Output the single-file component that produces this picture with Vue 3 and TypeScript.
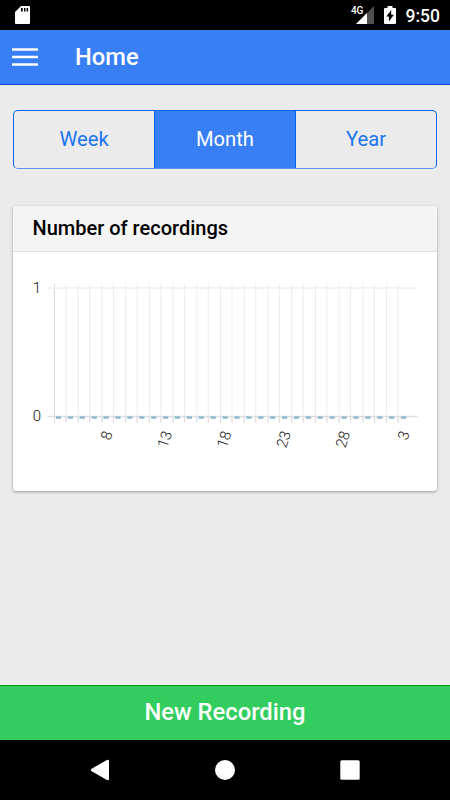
<script setup lang="ts">
import { ref } from 'vue'

const periods = ['Week', 'Month', 'Year'] as const
const selected = ref<(typeof periods)[number]>('Month')

const firstDay = 4
const days = Array.from({ length: 30 }, (_, i) => {
  const day = firstDay + i
  return {
    line: 42.5 + i * 11.86 - (i % 2 ? 0.4 : 0),
    bar: 43.9 + i * 11.9,
    center: 46.6 + i * 11.88,
    label: i % 5 === 4 ? String(day > 30 ? day - 30 : day) : '',
  }
})
</script>

<template>
  <div class="screen">
    <div class="status">
      <svg class="sd" width="16" height="20" viewBox="0 0 16 20">
        <path fill="#fff" fill-rule="evenodd" d="M6 1h8q1 0 1 1v16q0 1-1 1H1q-1 0-1-1V7zM6 3v3.500h1.700V3zM9 3v3.500h1.500V3zM11.600 3v3.500h1.500V3z" />
      </svg>
      <div class="signal">
        <span class="network">4G</span>
        <svg width="18" height="18" viewBox="0 0 18 18">
          <path fill="#505050" d="M18 0v18H0z" />
          <path fill="#fff" d="M11 7v11H0z" />
        </svg>
      </div>
      <svg class="battery" width="12" height="19" viewBox="0 0 12 19">
        <path fill="#fff" d="M3.500 0h5v2H11q1 0 1 1v14q0 1-1 1H1q-1 0-1-1V3q0-1 1-1h2.500z" />
        <path fill="#000" d="M7.200 4 2.300 10.500h2.600v5L9.900 8.800H7.200z" />
      </svg>
      <span class="clock">9:50</span>
    </div>

    <header class="bar">
      <button class="menu" aria-label="Menu">
        <svg width="26" height="20" viewBox="0 0 26 20" fill="#fff">
          <rect y="1.300" width="26" height="2.500" rx=".6" />
          <rect y="8.800" width="26" height="2.500" rx=".6" />
          <rect y="16.300" width="26" height="2.500" rx=".6" />
        </svg>
      </button>
      <h1>Home</h1>
    </header>

    <main>
      <div class="segments">
        <button
          v-for="period in periods"
          :key="period"
          :class="{ active: period === selected }"
          @click="selected = period"
        >{{ period }}</button>
      </div>

      <section class="card">
        <h2>Number of recordings</h2>
        <svg class="chart" width="424" height="239" viewBox="1 0 424 239">
          <g fill="#ececec">
            <rect v-for="(d, i) in days" :key="i" :x="d.line - 0.5" y="31.700" width="1" height="138" />
          </g>
          <g fill="#d9d9d9">
            <rect v-for="(d, i) in days" :key="i" :x="d.line - 0.5" y="165" width="1" height="5.600" />
            <rect x="42" y="31.700" width="1" height="138.900" />
          </g>
          <rect x="35.500" y="35.300" width="370" height="1.500" fill="#efefef" />
          <rect x="35.500" y="163.800" width="370" height="1.500" fill="#dedede" />
          <g fill="#8fbad0">
            <rect v-for="(d, i) in days" :key="i" :x="d.bar" y="164.300" width="5.200" height="2.500" />
          </g>
          <g class="labels">
            <text x="29" y="40.500" text-anchor="end">1</text>
            <text x="29" y="169" text-anchor="end">0</text>
            <template v-for="(d, i) in days" :key="i">
              <text
                v-if="d.label"
                text-anchor="end"
                :transform="`translate(${d.center + 6.7} 181) rotate(-72)`"
              >{{ d.label }}</text>
            </template>
          </g>
        </svg>
      </section>
    </main>

    <button class="record">New Recording</button>

    <nav class="system">
      <svg width="20" height="22" viewBox="0 0 20 22"><path fill="#fff" d="M16.500 1.200Q19 0 19 2v18q0 2-2.500.800L1.700 12.300q-1.700-1.300 0-2.600z" /></svg>
      <svg width="20" height="20" viewBox="0 0 20 20"><circle cx="10" cy="10" r="10" fill="#fff" /></svg>
      <svg width="20" height="20" viewBox="0 0 20 20"><rect x=".3" y=".3" width="19.400" height="19.400" rx="1.500" fill="#fff" /></svg>
    </nav>
  </div>
</template>

<style>
body {
  margin: 0;
}
</style>

<style scoped>
.screen {
  width: 450px;
  height: 800px;
  display: flex;
  flex-direction: column;
  overflow: hidden;
  background: #ebebeb;
  font-family: Roboto, sans-serif;
}
button {
  font-family: inherit;
  cursor: pointer;
}
.status {
  height: 30px;
  flex: none;
  display: flex;
  align-items: center;
  box-sizing: border-box;
  padding: 0 10px 0 15px;
  background: #000;
  color: #fff;
}
.sd {
  margin-right: auto;
}
.signal {
  display: flex;
  align-items: flex-start;
  height: 18px;
  margin-right: 10.500px;
}
.network {
  width: 4.500px;
  font-size: 10px;
  line-height: 10px;
  font-weight: 500;
  letter-spacing: -0.3px;
  white-space: nowrap;
}
.battery {
  margin-right: 9.500px;
  margin-top: 1px;
}
.clock {
  width: 34.500px;
  padding-top: 1px;
  font-size: 17.500px;
  line-height: 30px;
  font-weight: 500;
}
.bar {
  height: 55px;
  flex: none;
  box-sizing: border-box;
  display: flex;
  align-items: center;
  padding-left: 12px;
  background: #387ef5;
  border-bottom: 1px solid #0c46e2;
}
.menu {
  width: 26px;
  padding: 0;
  border: 0;
  background: none;
}
.menu svg {
  display: block;
}
h1 {
  margin: 0 0 0 37px;
  font-size: 23.700px;
  line-height: 54px;
  font-weight: 500;
  color: #fff;
}
main {
  flex: 1;
  padding: 25px 13px 0;
}
.segments {
  height: 59px;
  box-sizing: border-box;
  display: grid;
  grid-template-columns: 140px 142px 1fr;
  border: 1px solid #0c60ee;
  border-bottom-color: #5b93f4;
  border-radius: 5px;
  overflow: hidden;
}
.segments button {
  padding: 0 0 1px;
  border: 0;
  background: none;
  font-size: 20.200px;
  color: #1b74f2;
}
.segments .active {
  background: #387ef5;
  color: #fff;
  box-shadow: -1px 0 #0c60ee inset, 1px 0 #0c60ee inset;
}
.card {
  margin: 37px 0 0;
  height: 285px;
  overflow: hidden;
  border-radius: 3px;
  background: #fff;
  box-shadow: 0 1px 3px rgba(0, 0, 0, 0.35);
}
h2 {
  box-sizing: border-box;
  height: 46px;
  margin: 0;
  padding-left: 19.500px;
  border-bottom: 1px solid #ddd;
  background: #f4f4f4;
  font-size: 20px;
  line-height: 45px;
  font-weight: 500;
  color: #000;
}
.chart {
  display: block;
}
.labels {
  font-size: 15px;
  font-weight: 300;
  fill: #111;
}
.record {
  height: 55px;
  flex: none;
  box-sizing: border-box;
  padding: 0 0 2px;
  border: 0;
  border-top: 1px solid #0a9d0d;
  background: #33cd5f;
  color: #fff;
  font-size: 23.750px;
  font-weight: 500;
}
.system {
  height: 60px;
  flex: none;
  display: flex;
  align-items: center;
  justify-content: center;
  gap: 105px;
  background: #000;
}
</style>
